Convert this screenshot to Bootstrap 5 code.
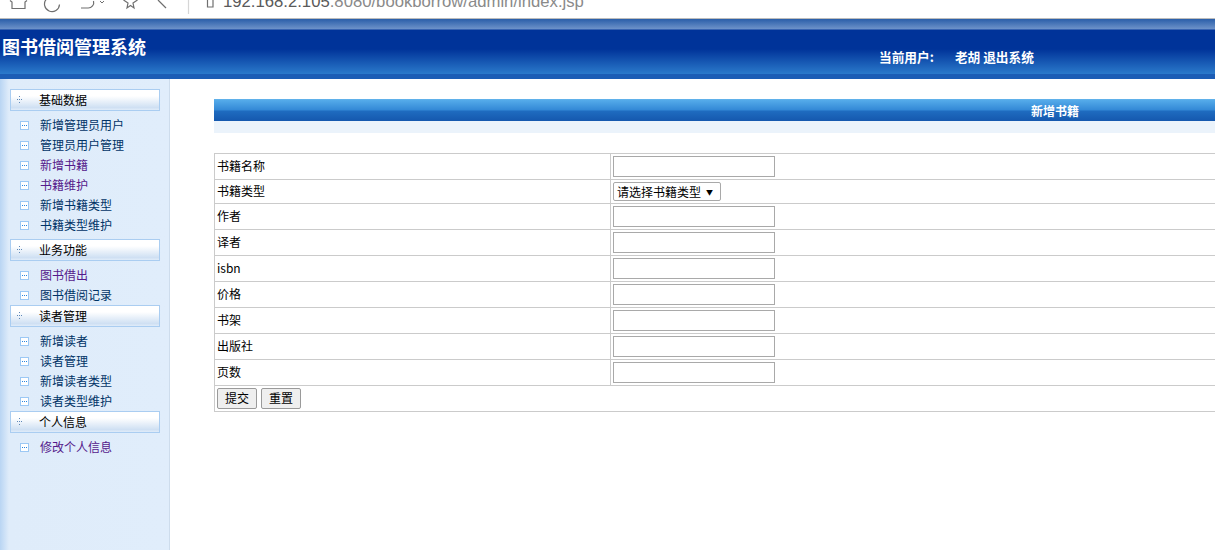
<!DOCTYPE html>
<html lang="zh"><head><meta charset="utf-8"><title>图书借阅管理系统</title>
<link href="https://cdn.jsdelivr.net/npm/bootstrap@5.3.0/dist/css/bootstrap.min.css" rel="stylesheet">
<style>
html,body{height:550px;overflow:hidden;background:#fff}
body{font:12px/1.2 "Liberation Sans","Noto Sans CJK SC",sans-serif;color:#000}
.chrome{height:19px;overflow:hidden;border-bottom:1px solid #bcbcbc;background:#fff}
.chrome svg{flex:none}
.addr{font-size:16.7px;line-height:16px;margin:-6px 0 0 8px;color:#8a8a8a;white-space:nowrap}
.addr b{font-weight:400;color:#5a5a5a}
.topbar{height:60px;background:linear-gradient(#2a5ea9 0,#6d92c9 10px,#003399 11px,#003399 30px,#2b7acb 55px,#1c5db5 55.5px,#1c5db5 60px);color:#fff}
.sys{font:700 18px/22px "Noto Sans CJK SC",sans-serif;margin:16px 0 0 2px;white-space:nowrap}
.who{font:700 12.7px/16px "Noto Sans CJK SC",sans-serif;margin:30px 0 0 733px;white-space:nowrap}
.who i{font-style:normal;display:inline-block;width:21px}
.body-row{height:471px}
.side{width:170px;flex:none;padding:10px 9px 0 10px;border-right:1px solid #cddcec;background:linear-gradient(90deg,#b9d5f3 0,#dfecfa 9px,#e0edfb 100%)}
.head-b{height:22px;width:150px;border:1px solid #aacdf1;background:linear-gradient(#fff 0,#fff 30%,#cfe0f3 88%,#e0ecf9 100%);padding:0 0 0 5px;font:12px/18px "Noto Sans CJK SC",sans-serif;color:#000}
.head-b span{margin-left:15px}
.links{padding:4px 0 0 10px;margin:0}
.links.gap{padding-bottom:4px}
.links a{height:20px;display:flex;align-items:center;gap:11px;font:12px/20px "Noto Sans CJK SC",sans-serif;color:#003366;text-decoration:none}
.links a.seen{color:#551a8b}
.main{flex:none;width:1682px;margin-left:44px;padding-top:20px}
.bar{height:22px;text-align:center;color:#fff;font:700 12px/23px "Noto Sans CJK SC",sans-serif;background:linear-gradient(#6ab6ea 0,#55abea 1px,#3388d6 11px,#1f6cc0 12px,#1558ae 22px)}
.strip{height:12px;background:#ebf3fb;margin-bottom:20px}
.tbl{width:100%;border-collapse:collapse;table-layout:fixed;font:12px/16px "Noto Sans CJK SC",sans-serif}
.tbl td{border:1px solid #cbcbcb;padding:0 2px;height:26px;vertical-align:middle}
.tbl td.first,.tbl td.lbl{padding-bottom:2px}
.tbl tr.short td{height:24px}
.tbl .first{width:396px}
.fld{display:block;width:162px;height:21px;border:1px solid #a9a9a9;background:#fff;padding:0}
.pick{display:flex;align-items:center;width:108px;height:19px;border:1px solid #a9a9a9;border-radius:2px;background:#fff;padding:0 0 0 3px;font-size:12px;white-space:nowrap}
.pick em{font-style:normal;font-size:7px;margin-left:5px}
.act{height:21px;padding:0 7px 1px;font:12px/18px "Noto Sans CJK SC",sans-serif;background:#efefef;border:1px solid #9a9a9a;border-radius:2px;color:#000;margin-right:4px}
</style></head><body>
<div class="chrome d-flex">
<svg width="215" height="18" viewBox="0 0 215 18" fill="none" stroke="#6f6f6f" stroke-width="1.2">
<path d="M10 0.500l2 1.500v6.500h13V2l2-1.500"/>
<path d="M46.500 -1a7.500 7.500 0 1 0 13 5.500"/>
<path d="M81 8h7a5.500 5.500 0 0 0 5.500-7"/><path d="M100 1l2 2 2-2" stroke-width="1"/>
<path d="M123.500 0l4.500 3-1 5 3.500-2.500 3.500 2.500-1-5 4.500-3"/>
<path d="M158 0l8 8"/>
<path d="M188.500 -2V14" stroke="#d6d6d6"/>
<path d="M207.500 -2v9h5.500v-9"/>
</svg>
<div class="addr"><b>192.168.2.105</b>:8080/bookborrow/admin/index.jsp</div>
</div>
<div class="topbar d-flex">
<div class="sys">图书借阅管理系统</div>
<div class="who">当前用户:<i></i>老胡 退出系统</div>
</div>
<div class="body-row d-flex">
<aside class="side">
<div class="head-b d-flex align-items-center"><svg width="8" height="8" viewBox="0 0 8 8" fill="#5d87b8"><rect x="3" y="0" width="1" height="1"/><rect x="1" y="3" width="1" height="1"/><rect x="3" y="3" width="1" height="1"/><rect x="5" y="3" width="1" height="1"/><rect x="3" y="6" width="1" height="1"/></svg><span>基础数据</span></div>
<ul class="links gap list-unstyled">
<li><a href="#"><svg width="9" height="9" viewBox="0 0 9 9"><rect x=".5" y=".5" width="8" height="8" fill="#fff" stroke="#9cc8f4"/><path d="M2 4h1v1H2zM4 4h1v1H4zM6 4h1v1H6z" fill="#2a85e0"/></svg>新增管理员用户</a></li>
<li><a href="#"><svg width="9" height="9" viewBox="0 0 9 9"><rect x=".5" y=".5" width="8" height="8" fill="#fff" stroke="#9cc8f4"/><path d="M2 4h1v1H2zM4 4h1v1H4zM6 4h1v1H6z" fill="#2a85e0"/></svg>管理员用户管理</a></li>
<li><a class="seen" href="#"><svg width="9" height="9" viewBox="0 0 9 9"><rect x=".5" y=".5" width="8" height="8" fill="#fff" stroke="#9cc8f4"/><path d="M2 4h1v1H2zM4 4h1v1H4zM6 4h1v1H6z" fill="#2a85e0"/></svg>新增书籍</a></li>
<li><a class="seen" href="#"><svg width="9" height="9" viewBox="0 0 9 9"><rect x=".5" y=".5" width="8" height="8" fill="#fff" stroke="#9cc8f4"/><path d="M2 4h1v1H2zM4 4h1v1H4zM6 4h1v1H6z" fill="#2a85e0"/></svg>书籍维护</a></li>
<li><a href="#"><svg width="9" height="9" viewBox="0 0 9 9"><rect x=".5" y=".5" width="8" height="8" fill="#fff" stroke="#9cc8f4"/><path d="M2 4h1v1H2zM4 4h1v1H4zM6 4h1v1H6z" fill="#2a85e0"/></svg>新增书籍类型</a></li>
<li><a href="#"><svg width="9" height="9" viewBox="0 0 9 9"><rect x=".5" y=".5" width="8" height="8" fill="#fff" stroke="#9cc8f4"/><path d="M2 4h1v1H2zM4 4h1v1H4zM6 4h1v1H6z" fill="#2a85e0"/></svg>书籍类型维护</a></li>
</ul>
<div class="head-b d-flex align-items-center"><svg width="8" height="8" viewBox="0 0 8 8" fill="#5d87b8"><rect x="3" y="0" width="1" height="1"/><rect x="1" y="3" width="1" height="1"/><rect x="3" y="3" width="1" height="1"/><rect x="5" y="3" width="1" height="1"/><rect x="3" y="6" width="1" height="1"/></svg><span>业务功能</span></div>
<ul class="links list-unstyled">
<li><a class="seen" href="#"><svg width="9" height="9" viewBox="0 0 9 9"><rect x=".5" y=".5" width="8" height="8" fill="#fff" stroke="#9cc8f4"/><path d="M2 4h1v1H2zM4 4h1v1H4zM6 4h1v1H6z" fill="#2a85e0"/></svg>图书借出</a></li>
<li><a href="#"><svg width="9" height="9" viewBox="0 0 9 9"><rect x=".5" y=".5" width="8" height="8" fill="#fff" stroke="#9cc8f4"/><path d="M2 4h1v1H2zM4 4h1v1H4zM6 4h1v1H6z" fill="#2a85e0"/></svg>图书借阅记录</a></li>
</ul>
<div class="head-b d-flex align-items-center"><svg width="8" height="8" viewBox="0 0 8 8" fill="#5d87b8"><rect x="3" y="0" width="1" height="1"/><rect x="1" y="3" width="1" height="1"/><rect x="3" y="3" width="1" height="1"/><rect x="5" y="3" width="1" height="1"/><rect x="3" y="6" width="1" height="1"/></svg><span>读者管理</span></div>
<ul class="links list-unstyled">
<li><a href="#"><svg width="9" height="9" viewBox="0 0 9 9"><rect x=".5" y=".5" width="8" height="8" fill="#fff" stroke="#9cc8f4"/><path d="M2 4h1v1H2zM4 4h1v1H4zM6 4h1v1H6z" fill="#2a85e0"/></svg>新增读者</a></li>
<li><a href="#"><svg width="9" height="9" viewBox="0 0 9 9"><rect x=".5" y=".5" width="8" height="8" fill="#fff" stroke="#9cc8f4"/><path d="M2 4h1v1H2zM4 4h1v1H4zM6 4h1v1H6z" fill="#2a85e0"/></svg>读者管理</a></li>
<li><a href="#"><svg width="9" height="9" viewBox="0 0 9 9"><rect x=".5" y=".5" width="8" height="8" fill="#fff" stroke="#9cc8f4"/><path d="M2 4h1v1H2zM4 4h1v1H4zM6 4h1v1H6z" fill="#2a85e0"/></svg>新增读者类型</a></li>
<li><a href="#"><svg width="9" height="9" viewBox="0 0 9 9"><rect x=".5" y=".5" width="8" height="8" fill="#fff" stroke="#9cc8f4"/><path d="M2 4h1v1H2zM4 4h1v1H4zM6 4h1v1H6z" fill="#2a85e0"/></svg>读者类型维护</a></li>
</ul>
<div class="head-b d-flex align-items-center"><svg width="8" height="8" viewBox="0 0 8 8" fill="#5d87b8"><rect x="3" y="0" width="1" height="1"/><rect x="1" y="3" width="1" height="1"/><rect x="3" y="3" width="1" height="1"/><rect x="5" y="3" width="1" height="1"/><rect x="3" y="6" width="1" height="1"/></svg><span>个人信息</span></div>
<ul class="links list-unstyled">
<li><a class="seen" href="#"><svg width="9" height="9" viewBox="0 0 9 9"><rect x=".5" y=".5" width="8" height="8" fill="#fff" stroke="#9cc8f4"/><path d="M2 4h1v1H2zM4 4h1v1H4zM6 4h1v1H6z" fill="#2a85e0"/></svg>修改个人信息</a></li>
</ul>
</aside>
<main class="main">
<div class="bar">新增书籍</div>
<div class="strip"></div>
<form>
<table class="tbl">
<tr><td class="first">书籍名称</td><td><input class="fld" type="text"></td></tr>
<tr class="short"><td class="lbl">书籍类型</td><td><div class="pick">请选择书籍类型<em>▼</em></div></td></tr>
<tr><td class="lbl">作者</td><td><input class="fld" type="text"></td></tr>
<tr><td class="lbl">译者</td><td><input class="fld" type="text"></td></tr>
<tr><td class="lbl">isbn</td><td><input class="fld" type="text"></td></tr>
<tr><td class="lbl">价格</td><td><input class="fld" type="text"></td></tr>
<tr><td class="lbl">书架</td><td><input class="fld" type="text"></td></tr>
<tr><td class="lbl">出版社</td><td><input class="fld" type="text"></td></tr>
<tr><td class="lbl">页数</td><td><input class="fld" type="text"></td></tr>
<tr><td colspan="2"><button class="act" type="button">提交</button><button class="act" type="button">重置</button></td></tr>
</table>
</form>
</main>
</div>
<script src="https://cdn.jsdelivr.net/npm/bootstrap@5.3.0/dist/js/bootstrap.bundle.min.js"></script>
</body></html>
